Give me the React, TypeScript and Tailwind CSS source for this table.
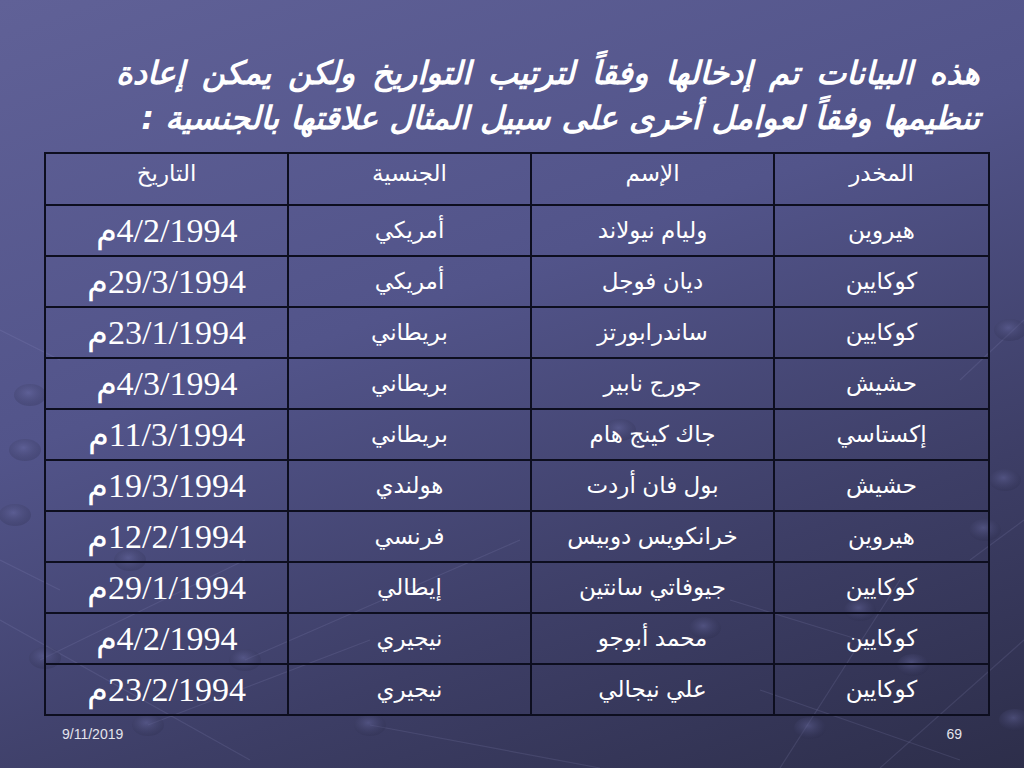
import React from 'react'

type Row = { drug: string; name: string; nation: string; date: string }

const rows: Row[] = [
  { drug: 'هيروين', name: 'وليام نيولاند', nation: 'أمريكي', date: '4/2/1994م' },
  { drug: 'كوكايين', name: 'ديان فوجل', nation: 'أمريكي', date: '29/3/1994م' },
  { drug: 'كوكايين', name: 'ساندرابورتز', nation: 'بريطاني', date: '23/1/1994م' },
  { drug: 'حشيش', name: 'جورج نابير', nation: 'بريطاني', date: '4/3/1994م' },
  { drug: 'إكستاسي', name: 'جاك كينج هام', nation: 'بريطاني', date: '11/3/1994م' },
  { drug: 'حشيش', name: 'بول فان أردت', nation: 'هولندي', date: '19/3/1994م' },
  { drug: 'هيروين', name: 'خرانكويس دوبيس', nation: 'فرنسي', date: '12/2/1994م' },
  { drug: 'كوكايين', name: 'جيوفاتي سانتين', nation: 'إيطالي', date: '29/1/1994م' },
  { drug: 'كوكايين', name: 'محمد أبوجو', nation: 'نيجيري', date: '4/2/1994م' },
  { drug: 'كوكايين', name: 'علي نيجالي', nation: 'نيجيري', date: '23/2/1994م' },
]

// faint molecule balls of the slide background
const balls = [
  [45, 658], [245, 660], [148, 725], [370, 725], [25, 450], [15, 515], [30, 395],
  [1010, 330], [1005, 480], [985, 530], [810, 728], [1015, 720], [913, 665],
  [860, 610], [705, 628], [620, 430], [130, 560],
]

function Backdrop() {
  return (
    <svg className="absolute inset-0" width="1024" height="768" viewBox="0 0 1024 768">
      <defs>
        <radialGradient id="ball" cx="45%" cy="40%" r="60%">
          <stop offset="0%" stopColor="#6a6ca4" stopOpacity="0.45" />
          <stop offset="100%" stopColor="#2a2b4a" stopOpacity="0.25" />
        </radialGradient>
      </defs>
      <g stroke="#a4a6d8" strokeOpacity="0.14" strokeWidth="1.2">
        <line x1="0" y1="620" x2="250" y2="760" />
        <line x1="40" y1="660" x2="245" y2="560" />
        <line x1="245" y1="660" x2="520" y2="540" />
        <line x1="148" y1="725" x2="370" y2="640" />
        <line x1="370" y1="725" x2="600" y2="768" />
        <line x1="0" y1="330" x2="60" y2="360" />
        <line x1="0" y1="560" x2="60" y2="590" />
        <line x1="960" y1="380" x2="1024" y2="320" />
        <line x1="970" y1="560" x2="1024" y2="520" />
        <line x1="880" y1="768" x2="1024" y2="640" />
        <line x1="760" y1="690" x2="960" y2="760" />
        <line x1="780" y1="768" x2="900" y2="580" />
        <line x1="730" y1="600" x2="860" y2="640" />
      </g>
      {balls.map(([x, y], i) => (
        <ellipse key={i} cx={x} cy={y} rx="16" ry="11" fill="url(#ball)" />
      ))}
    </svg>
  )
}

export default function App() {
  return (
    <div className="relative w-[1024px] h-[768px] overflow-hidden bg-[linear-gradient(160deg,#606197_0%,#52548a_40%,#3d3e66_72%,#2d2e4a_100%)]">
      <Backdrop />

      <div className="relative flex flex-col">
        {/* title */}
        <div
          dir="rtl"
          className="mt-[51px] ml-[116px] mr-[44px] text-white font-bold italic text-[32px] leading-[45px] font-['DejaVu_Sans',sans-serif]"
        >
          <p className="text-justify [text-align-last:justify]">
            هذه البيانات تم إدخالها وفقاً لترتيب التواريخ ولكن يمكن إعادة
          </p>
          <p>تنظيمها وفقاً لعوامل أخرى على سبيل المثال علاقتها بالجنسية :</p>
        </div>

        {/* table */}
        <table
          dir="rtl"
          className="mt-[11px] ml-[44px] w-[944px] table-fixed border-collapse text-white"
        >
          <colgroup>
            <col className="w-[215px]" />
            <col className="w-[243px]" />
            <col className="w-[243px]" />
            <col className="w-[243px]" />
          </colgroup>
          <thead>
            <tr className="h-[52px]">
              {['المخدر', 'الإسم', 'الجنسية', 'التاريخ'].map((h) => (
                <th
                  key={h}
                  className="border-2 border-[#0d0e1f] align-top pt-[2px] font-normal text-[23px] font-['Liberation_Sans','DejaVu_Sans',sans-serif]"
                >
                  {h}
                </th>
              ))}
            </tr>
          </thead>
          <tbody>
            {rows.map((r, i) => (
              <tr key={i} className="h-[51px]">
                <td className="border-2 border-[#0d0e1f] text-center text-[23px] font-normal font-['Liberation_Sans','DejaVu_Sans',sans-serif]">
                  {r.drug}
                </td>
                <td className="border-2 border-[#0d0e1f] text-center text-[23px] font-normal font-['Liberation_Sans','DejaVu_Sans',sans-serif]">
                  {r.name}
                </td>
                <td className="border-2 border-[#0d0e1f] text-center text-[23px] font-normal font-['Liberation_Sans','DejaVu_Sans',sans-serif]">
                  {r.nation}
                </td>
                <td className="border-2 border-[#0d0e1f] text-center text-[34px] leading-[40px] font-normal font-['Liberation_Serif','Times_New_Roman',serif]">
                  {r.date}
                </td>
              </tr>
            ))}
          </tbody>
        </table>

        {/* footer */}
        <div className="mt-[8px] ml-[62px] mr-[62px] flex justify-between text-[14px] text-[#e4e4ec] font-['Liberation_Sans',sans-serif]">
          <span>9/11/2019</span>
          <span>69</span>
        </div>
      </div>
    </div>
  )
}
